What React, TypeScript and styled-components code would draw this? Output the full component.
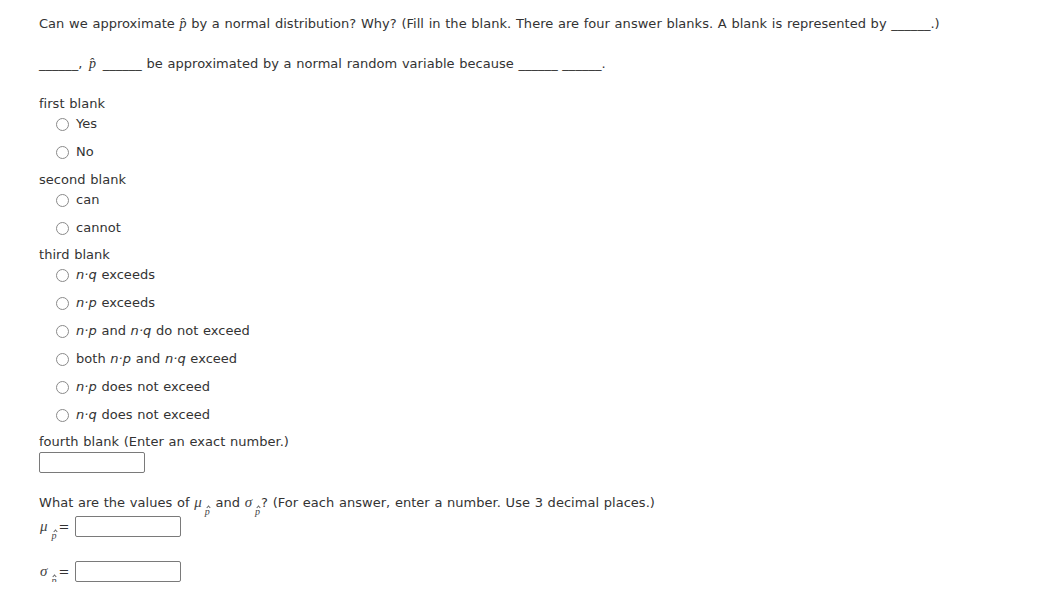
import React from "react";
import styled, { createGlobalStyle } from "styled-components";

const Global = createGlobalStyle`
  html, body { margin: 0; padding: 0; background: #ffffff; }
  body {
    font-family: "DejaVu Sans", Verdana, sans-serif;
    font-size: 13px;
    color: #333333;
    letter-spacing: 0.03px;
    word-spacing: 0.5px;
  }
`;

const Page = styled.div`
  padding: 14px 0 0 39px;
  display: flex;
  flex-direction: column;
`;

const Line = styled.div<{ $mt?: number }>`
  line-height: 20px;
  height: 20px;
  white-space: nowrap;
  margin-top: ${(p) => p.$mt ?? 0}px;
`;

const Hat = styled.span<{ $pad?: number }>`
  font-family: "Liberation Serif", "Times New Roman", serif;
  font-style: italic;
  font-size: 14px;
  line-height: 1;
  margin: 0 ${(p) => p.$pad ?? 0}px;
`;

const Var = styled.span`
  font-style: italic;
`;

const OptionList = styled.div`
  display: flex;
  flex-direction: column;
  gap: 8px;
  padding-left: 17px;
`;

const Option = styled.label`
  display: flex;
  align-items: center;
  gap: 7px;
  line-height: 20px;
  height: 20px;
  white-space: nowrap;
`;

const Radio = styled.span`
  width: 13px;
  height: 13px;
  border: 1px solid #8a8a8a;
  border-radius: 50%;
  box-sizing: border-box;
  background: #fff;
  display: inline-block;
  flex: none;
`;

const BoxRow = styled.div`
  display: flex;
`;

const Box = styled.span`
  display: block;
  width: 106px;
  height: 21px;
  border: 1px solid #7a7a7a;
  border-radius: 2px;
  box-sizing: border-box;
  background: #fff;
  flex: none;
`;

const MathSym = styled.span`
  position: relative;
  font-family: "Liberation Serif", "Times New Roman", serif;
  font-style: italic;
  font-size: 15px;
  line-height: 1;
  color: #444;
`;

const Sub = styled.span<{ $top: number; $ml: number }>`
  position: absolute;
  left: 100%;
  top: ${(p) => p.$top}px;
  margin-left: ${(p) => p.$ml}px;
  font-size: 10px;
  line-height: 10px;
  &::before {
    content: "";
    position: absolute;
    left: 2px;
    top: -1px;
    width: 2px;
    height: 2px;
    border-left: 1px solid #666;
    border-top: 1px solid #666;
    transform: rotate(45deg);
  }
`;

const SubSpacer = styled.span`
  display: inline-block;
  width: 9px;
`;

const EqRow = styled.div<{ $mt: number }>`
  display: flex;
  align-items: center;
  height: 21px;
  margin-top: ${(p) => p.$mt}px;
  white-space: nowrap;
`;

const EqLabel = styled.span`
  width: 35px;
  display: flex;
  align-items: center;
  padding-left: 1px;
`;

const Eq = styled.span`
  margin-left: 2px;
`;

function PHat({ pad }: { pad?: number }) {
  return <Hat $pad={pad}>p̂</Hat>;
}

function Sym({ s, top = 13, ml = 3 }: { s: string; top?: number; ml?: number }) {
  return (
    <>
      <MathSym>
        {s}
        <Sub $top={top} $ml={ml}>p</Sub>
      </MathSym>
      <SubSpacer />
    </>
  );
}

const NP = ({ a }: { a: "p" | "q" }) => <Var>n·{a}</Var>;

export default function App() {
  return (
    <>
      <Global />
      <Page>
        <Line>
          Can we approximate <PHat /> by a normal distribution? Why? (Fill in the blank. There are four answer blanks. A blank is represented by ______.)
        </Line>
        <Line $mt={20}>
          ______, <PHat pad={2} /> ______ be approximated by a normal random variable because ______ ______.
        </Line>
        <Line $mt={20}>first blank</Line>
        <OptionList>
          <Option><Radio />Yes</Option>
          <Option><Radio />No</Option>
        </OptionList>
        <Line $mt={8}>second blank</Line>
        <OptionList>
          <Option><Radio />can</Option>
          <Option><Radio />cannot</Option>
        </OptionList>
        <Line $mt={7}>third blank</Line>
        <OptionList>
          <Option><Radio /><span><NP a="q" /> exceeds</span></Option>
          <Option><Radio /><span><NP a="p" /> exceeds</span></Option>
          <Option><Radio /><span><NP a="p" /> and <NP a="q" /> do not exceed</span></Option>
          <Option><Radio /><span>both <NP a="p" /> and <NP a="q" /> exceed</span></Option>
          <Option><Radio /><span><NP a="p" /> does not exceed</span></Option>
          <Option><Radio /><span><NP a="q" /> does not exceed</span></Option>
        </OptionList>
        <Line $mt={7}>fourth blank (Enter an exact number.)</Line>
        <BoxRow><Box /></BoxRow>
        <Line $mt={20}>
          What are the values of <Sym s="μ" /> and <Sym s="σ" />? (For each answer, enter a number. Use 3 decimal places.)
        </Line>
        <EqRow $mt={3}>
          <EqLabel><Sym s="μ" top={12} ml={4} /><Eq>=</Eq></EqLabel>
          <Box />
        </EqRow>
        <EqRow $mt={24}>
          <EqLabel><Sym s="σ" top={12} ml={4} /><Eq>=</Eq></EqLabel>
          <Box />
        </EqRow>
      </Page>
    </>
  );
}
